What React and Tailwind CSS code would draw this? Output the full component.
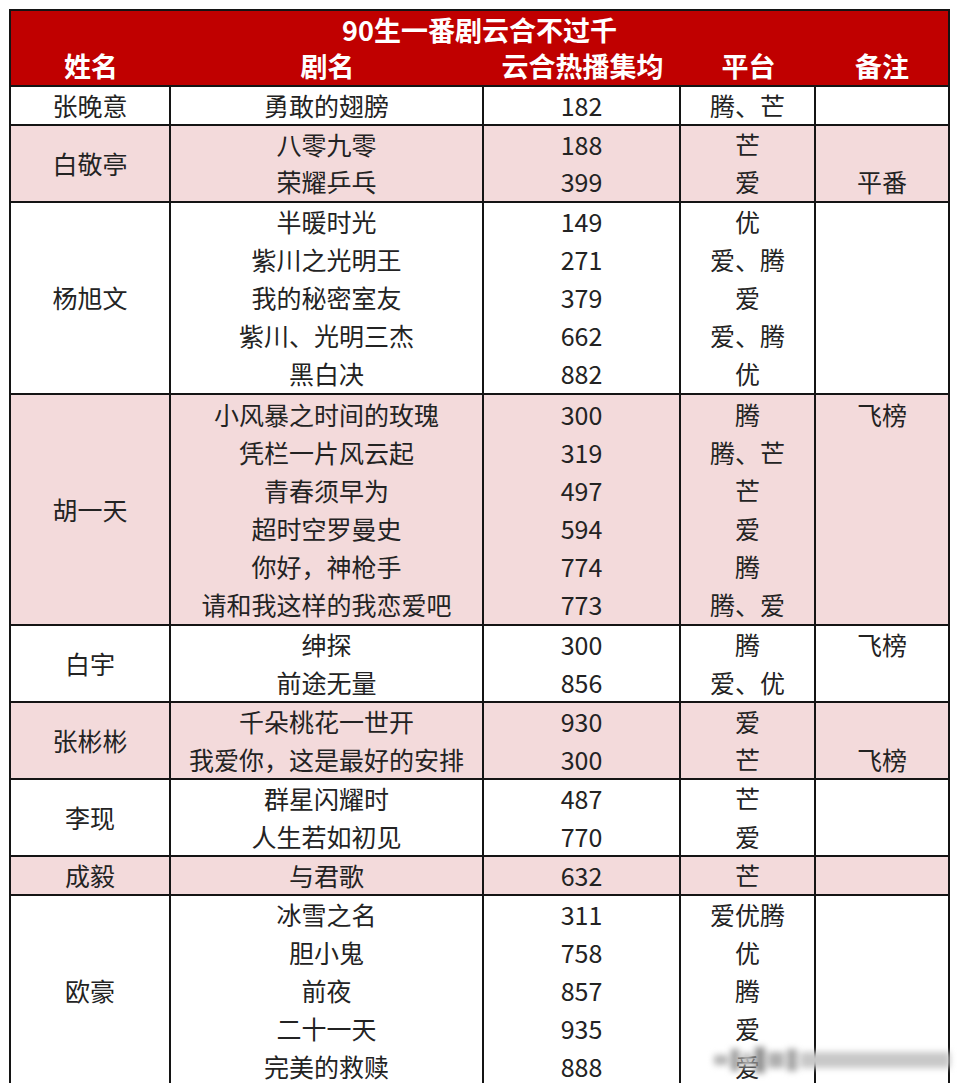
const groups = [
  { name: "张晚意", pink: false, rows: [["勇敢的翅膀", "182", "腾、芒", ""]] },
  {
    name: "白敬亭",
    pink: true,
    rows: [
      ["八零九零", "188", "芒", ""],
      ["荣耀乒乓", "399", "爱", "平番"],
    ],
  },
  {
    name: "杨旭文",
    pink: false,
    rows: [
      ["半暖时光", "149", "优", ""],
      ["紫川之光明王", "271", "爱、腾", ""],
      ["我的秘密室友", "379", "爱", ""],
      ["紫川、光明三杰", "662", "爱、腾", ""],
      ["黑白决", "882", "优", ""],
    ],
  },
  {
    name: "胡一天",
    pink: true,
    rows: [
      ["小风暴之时间的玫瑰", "300", "腾", "飞榜"],
      ["凭栏一片风云起", "319", "腾、芒", ""],
      ["青春须早为", "497", "芒", ""],
      ["超时空罗曼史", "594", "爱", ""],
      ["你好，神枪手", "774", "腾", ""],
      ["请和我这样的我恋爱吧", "773", "腾、爱", ""],
    ],
  },
  {
    name: "白宇",
    pink: false,
    rows: [
      ["绅探", "300", "腾", "飞榜"],
      ["前途无量", "856", "爱、优", ""],
    ],
  },
  {
    name: "张彬彬",
    pink: true,
    rows: [
      ["千朵桃花一世开", "930", "爱", ""],
      ["我爱你，这是最好的安排", "300", "芒", "飞榜"],
    ],
  },
  {
    name: "李现",
    pink: false,
    rows: [
      ["群星闪耀时", "487", "芒", ""],
      ["人生若如初见", "770", "爱", ""],
    ],
  },
  { name: "成毅", pink: true, rows: [["与君歌", "632", "芒", ""]] },
  {
    name: "欧豪",
    pink: false,
    rows: [
      ["冰雪之名", "311", "爱优腾", ""],
      ["胆小鬼", "758", "优", ""],
      ["前夜", "857", "腾", ""],
      ["二十一天", "935", "爱", ""],
      ["完美的救赎", "888", "爱", ""],
    ],
  },
];

const ROW = 38.5;
const widths = ["w-[160px]", "w-[313px]", "w-[197px]", "w-[135px]", "w-[132px]"];

const Column = ({ items, className }) => (
  <div className={"flex flex-col " + className}>
    {items.map((t, i) => (
      <div key={i} className="flex flex-1 items-center justify-center leading-none">
        {t}
      </div>
    ))}
  </div>
);

const Group = ({ group }) => {
  const cols = [0, 1, 2, 3].map((c) => group.rows.map((r) => r[c]));
  return (
    <div
      className={
        "flex border-b-2 border-[#141414] " +
        (group.pink ? "bg-[#f3dadb]" : "bg-white")
      }
      style={{ height: group.rows.length * ROW }}
    >
      <div className={"flex items-center justify-center border-r-2 border-[#141414] leading-none " + widths[0]}>
        {group.name}
      </div>
      <Column items={cols[0]} className={"border-r-2 border-[#141414] " + widths[1]} />
      <Column items={cols[1]} className={"border-r-2 border-[#141414] " + widths[2]} />
      <Column items={cols[2]} className={"border-r-2 border-[#141414] " + widths[3]} />
      <Column items={cols[3]} className={widths[4]} />
    </div>
  );
};

export default function App() {
  return (
    <div
      className="relative h-[1083px] overflow-hidden bg-white pl-[9px] pt-[9px]"
      style={{ fontFamily: '"Noto Sans CJK SC", "Noto Sans", sans-serif' }}
    >
      <div className="w-[941px] border-x-2 border-t-2 border-[#141414] text-[25px] text-[#232323]">
        <div className="bg-[#c00000] text-[27px] font-bold text-white">
          <div className="flex h-[37px] items-center justify-center leading-none">
            90生一番剧云合不过千
          </div>
          <div className="flex h-[39px] border-b-2 border-[#141414]">
            {["姓名", "剧名", "云合热播集均", "平台", "备注"].map((h, i) => (
              <div key={h} className={"flex items-center justify-center pb-[2px] leading-none " + widths[i]}>
                {h}
              </div>
            ))}
          </div>
        </div>
        {groups.map((g) => (
          <Group key={g.name} group={g} />
        ))}
      </div>

      {/* blurred watermark */}
      <div className="absolute left-[714px] top-[1046px] flex h-[28px] w-[236px] items-center gap-[3px] blur-[3px]">
        <div className="h-[10px] w-[14px] bg-[#b5b5b5]" />
        <div className="h-[22px] w-[8px] bg-[#9a9a9a]" />
        <div className="h-[14px] w-[10px] bg-[#bdbdbd]" />
        <div className="h-[26px] w-[10px] bg-[#8f8f8f]" />
        <div className="h-[16px] w-[16px] bg-[#b0b0b0]" />
        <div className="h-[22px] w-[10px] bg-[#a5a5a5]" />
        <div className="h-[16px] flex-1 bg-[#c8c8c8]" />
      </div>
    </div>
  );
}
